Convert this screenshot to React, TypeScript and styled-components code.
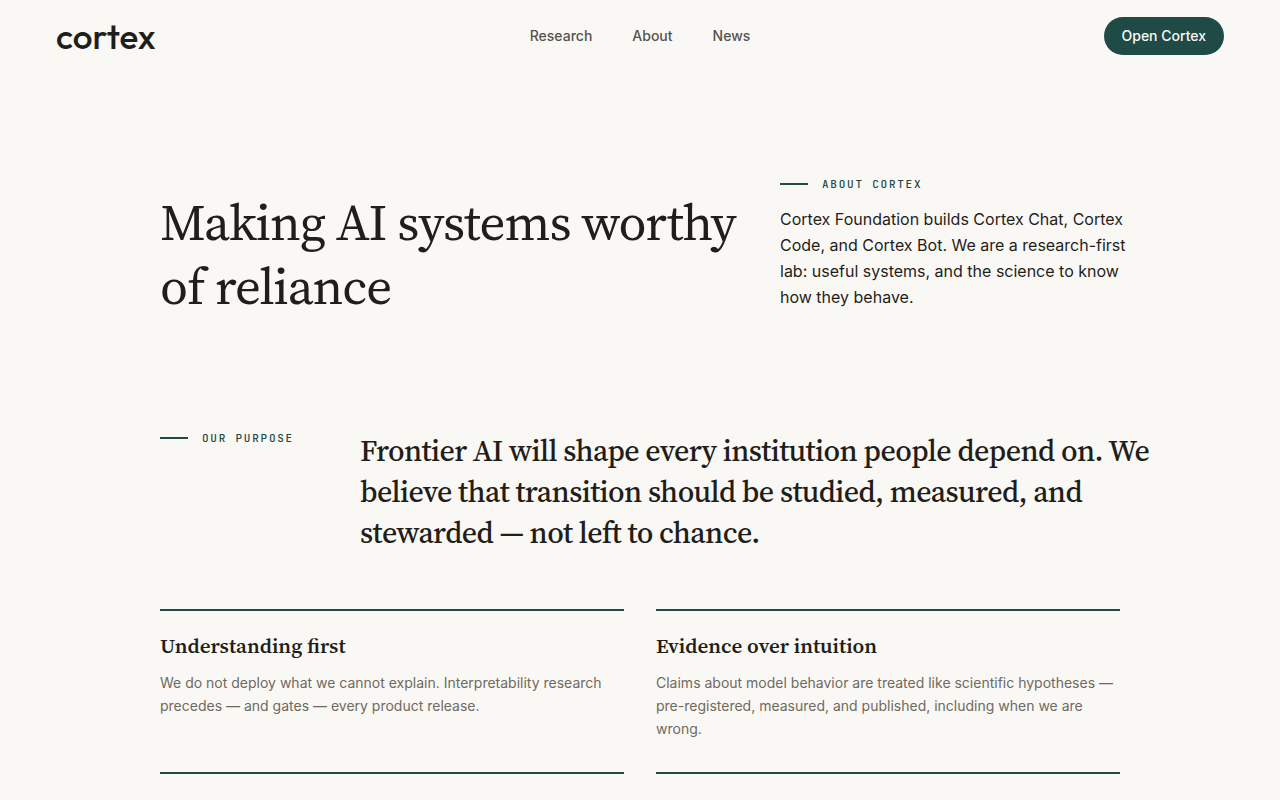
import React from "react";
import styled, { createGlobalStyle } from "styled-components";

const color = {
  paper: "#faf8f5",
  ink: "#1f1e1a",
  nav: "#55534d",
  muted: "#6e6a60",
  pine: "#1f4a46",
};
const serif = `"Source Serif 4", "Liberation Serif", serif`;
const sans = `Inter, "Liberation Sans", sans-serif`;
const mono = `"JetBrains Mono", "Liberation Mono", monospace`;

const GlobalStyle = createGlobalStyle`
  *, *::before, *::after { box-sizing: border-box; }
  body {
    margin: 0;
    background: ${color.paper};
    color: ${color.ink};
    font-family: ${sans};
  }
  h1, h2, h3, p { margin: 0; }
`;

const Header = styled.header`
  display: grid;
  grid-template-columns: 1fr auto 1fr;
  align-items: center;
  height: 72px;
  padding: 0 56px;
`;

const Logo = styled.a`
  justify-self: start;
  color: ${color.ink};
  font: 500 35px/40px Outfit, Lato, sans-serif;
  text-decoration: none;
`;

const Nav = styled.nav`
  display: flex;
  gap: 40px;
`;

const NavLink = styled.a`
  color: ${color.nav};
  font-size: 14px;
  font-weight: 500;
  line-height: 20px;
  text-decoration: none;
`;

const OpenButton = styled.button`
  justify-self: end;
  height: 38px;
  padding: 0 18px;
  border: 0;
  border-radius: 19px;
  background: ${color.pine};
  color: ${color.paper};
  font: 500 14px/20px ${sans};
  cursor: pointer;
`;

const Main = styled.main`
  padding: 104px 120px 0 160px;
`;

const Hero = styled.section`
  display: grid;
  grid-template-columns: minmax(0, 1fr) 380px;
  column-gap: 40px;
  align-items: end;
`;

const Title = styled.h1`
  font: 400 51px/64px ${serif};
  letter-spacing: -0.02em;
`;

const Intro = styled.div`
  display: grid;
  row-gap: 14px;
  padding-bottom: 8px;
`;

const Eyebrow = styled.p`
  display: flex;
  align-items: center;
  gap: 14px;
  color: ${color.pine};
  font: 500 11px/16px ${mono};
  letter-spacing: 0.16em;
  text-transform: uppercase;
  white-space: nowrap;

  &::before {
    content: "";
    width: 28px;
    height: 2px;
    background: ${color.pine};
  }
`;

const Lead = styled.p`
  max-width: 360px;
  font-size: 16px;
  line-height: 26px;
`;

const Purpose = styled.section`
  display: grid;
  grid-template-columns: 160px minmax(0, 1fr);
  column-gap: 40px;
  align-items: start;
  margin-top: 112px;
`;

const Statement = styled.h2`
  font: 500 30px/41px ${serif};
  letter-spacing: -0.02em;
`;

const Principles = styled.section`
  display: grid;
  grid-template-columns: 1fr 1fr;
  gap: 32px;
  max-width: 960px;
  margin-top: 56px;
  margin-right: 40px;
`;

const Principle = styled.article`
  border-top: 2px solid ${color.pine};
`;

const PrincipleTitle = styled.h3`
  padding-top: 22px;
  font: 600 21px/26px ${serif};
`;

const PrincipleText = styled.p`
  margin-top: 12px;
  color: ${color.muted};
  font-size: 14px;
  line-height: 23px;
`;

const links = ["Research", "About", "News"];

const principles = [
  {
    title: "Understanding first",
    text: "We do not deploy what we cannot explain. Interpretability research precedes — and gates — every product release.",
  },
  {
    title: "Evidence over intuition",
    text: "Claims about model behavior are treated like scientific hypotheses — pre-registered, measured, and published, including when we are wrong.",
  },
];

export default function App() {
  return (
    <>
      <GlobalStyle />
      <Header>
        <Logo href="#">cortex</Logo>
        <Nav>
          {links.map((label) => (
            <NavLink key={label} href={`#${label.toLowerCase()}`}>
              {label}
            </NavLink>
          ))}
        </Nav>
        <OpenButton type="button">Open Cortex</OpenButton>
      </Header>
      <Main>
        <Hero>
          <Title>Making AI systems worthy of reliance</Title>
          <Intro>
            <Eyebrow>About Cortex</Eyebrow>
            <Lead>
              Cortex Foundation builds Cortex Chat, Cortex Code, and Cortex Bot. We are a
              research-first lab: useful systems, and the science to know how they behave.
            </Lead>
          </Intro>
        </Hero>
        <Purpose>
          <Eyebrow>Our purpose</Eyebrow>
          <Statement>
            Frontier AI will shape every institution people depend on. We believe that
            transition should be studied, measured, and stewarded — not left to chance.
          </Statement>
        </Purpose>
        <Principles>
          {principles.map(({ title, text }) => (
            <Principle key={title}>
              <PrincipleTitle>{title}</PrincipleTitle>
              <PrincipleText>{text}</PrincipleText>
            </Principle>
          ))}
          <Principle />
          <Principle />
        </Principles>
      </Main>
    </>
  );
}
